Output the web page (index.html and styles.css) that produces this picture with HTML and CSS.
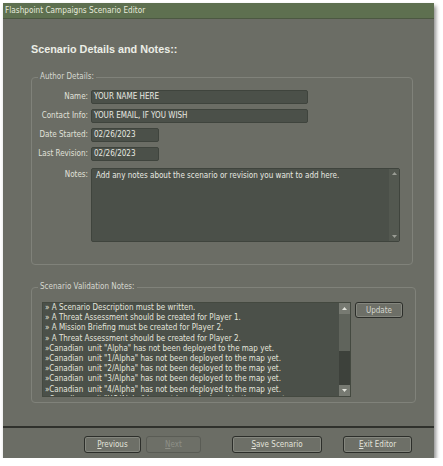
FILE: index.html
```html
<!DOCTYPE html>
<html lang="en">
<head>
  <meta charset="UTF-8" />
  <title>Flashpoint Campaigns Scenario Editor</title>
  <link rel="stylesheet" href="styles.css">
</head>
<body>

  <div class="window">
    <div class="titlebar">Flashpoint Campaigns Scenario Editor</div>

    <div class="content">
      <h1>Scenario Details and Notes::</h1>

      <fieldset class="group author">
        <legend>Author Details:</legend>
        <div class="form">
          <label>Name:</label>
          <div class="field name">YOUR NAME HERE</div>

          <label>Contact Info:</label>
          <div class="field name">YOUR EMAIL, IF YOU WISH</div>

          <label>Date Started:</label>
          <div class="field date">02/26/2023</div>

          <label>Last Revision:</label>
          <div class="field date">02/26/2023</div>

          <label class="top">Notes:</label>
          <div class="field notes">
            <div class="notes-text">Add any notes about the scenario or revision you want to add here.</div>
            <div class="scrollbar light">
              <svg class="arrow" width="9" height="9" viewBox="0 0 9 9"><polygon points="2,6 7,6 4.5,3" fill="#9a9d95"/></svg>
              <svg class="arrow" width="9" height="9" viewBox="0 0 9 9"><polygon points="2,3 7,3 4.5,6" fill="#9a9d95"/></svg>
            </div>
          </div>
        </div>
      </fieldset>

      <fieldset class="group validation">
        <legend>Scenario Validation Notes:</legend>
        <div class="validation-row">
          <div class="listbox">
            <div class="lines">
              <div>» A Scenario Description must be written.</div>
              <div>» A Threat Assessment should be created for Player 1.</div>
              <div>» A Mission Briefing must be created for Player 2.</div>
              <div>» A Threat Assessment should be created for Player 2.</div>
              <div>»Canadian&nbsp; unit "Alpha" has not been deployed to the map yet.</div>
              <div>»Canadian&nbsp; unit "1/Alpha" has not been deployed to the map yet.</div>
              <div>»Canadian&nbsp; unit "2/Alpha" has not been deployed to the map yet.</div>
              <div>»Canadian&nbsp; unit "3/Alpha" has not been deployed to the map yet.</div>
              <div>»Canadian&nbsp; unit "4/Alpha" has not been deployed to the map yet.</div>
              <div>»Canadian&nbsp; unit "HQ/Alpha" has not been deployed to the map yet.</div>
            </div>
            <div class="scrollbar dark">
              <div class="sb-btn"><svg width="9" height="9" viewBox="0 0 9 9"><polygon points="2,6 7,6 4.5,3" fill="#e2e4dc"/></svg></div>
              <div class="thumb"></div>
              <div class="sb-btn bottom"><svg width="9" height="9" viewBox="0 0 9 9"><polygon points="2,3 7,3 4.5,6" fill="#e2e4dc"/></svg></div>
            </div>
          </div>
          <button class="btn update">Update</button>
        </div>
      </fieldset>
    </div>

    <div class="footer">
      <button class="btn prev"><u>P</u>revious</button>
      <button class="btn next" disabled><u>N</u>ext</button>
      <button class="btn save"><u>S</u>ave Scenario</button>
      <button class="btn exit"><u>E</u>xit Editor</button>
    </div>
  </div>

</body>
</html>
```

FILE: styles.css
```css
body {
  margin: 0;
  background: #ffffff;
  font-family: "DejaVu Sans Condensed", "Liberation Sans", Arial, sans-serif;
  font-stretch: condensed;
  font-size: 8px;
  color: #e4e5dd;
}

.window {
  margin: 3px 0 0 3px;
  width: 431px;
  height: 455px;
  background: #6b6d65;
  box-shadow: 2px 3px 4px rgba(0, 0, 0, 0.45);
  display: flex;
  flex-direction: column;
}

.titlebar {
  height: 15px;
  line-height: 14px;
  padding-left: 2px;
  background: #5e7050;
  border-bottom: 1px solid #4c5842;
  color: #e6eadc;
  font-size: 8.2px;
}

.content {
  padding: 0 21px 0 28px;
}

h1 {
  margin: 23px 0 0 0;
  font-family: "Liberation Sans", Arial, sans-serif;
  font-stretch: normal;
  font-size: 10.8px;
  line-height: 14px;
  color: #eceee6;
}

.group {
  margin: 16px 0 0 0;
  padding: 0 12px 0 6px;
  border: 1px solid #80827a;
  border-radius: 4px;
}

.group legend {
  padding: 0 2px;
  color: #d6d8d0;
  line-height: 10px;
}

.author {
  height: 191px;
}

.form {
  display: grid;
  grid-template-columns: 50px auto;
  column-gap: 3px;
  row-gap: 5px;
  margin-top: 8px;
  justify-items: start;
}

.form label {
  justify-self: end;
  line-height: 14px;
  color: #e0e1d9;
  white-space: nowrap;
}

.form label.top {
  align-self: start;
  margin-top: 2px;
}

.field {
  box-sizing: border-box;
  height: 14px;
  line-height: 12px;
  padding: 0 2px;
  background: #4b5049;
  border: 1px solid #3f443d;
  border-radius: 2px;
  color: #e8e9e1;
  white-space: nowrap;
}

.field.name {
  width: 217px;
}

.field.date {
  width: 68px;
}

.field.notes {
  width: 309px;
  height: 74px;
  margin-top: 2px;
  padding: 0;
  display: flex;
}

.notes-text {
  flex: 1;
  padding: 2px 4px;
  line-height: 10px;
}

.scrollbar {
  width: 10px;
  display: flex;
  flex-direction: column;
  justify-content: space-between;
}

.scrollbar.light {
  background: #535850;
}

.scrollbar .arrow {
  display: block;
  margin: 0 auto;
}

.validation {
  margin-top: 17px;
  height: 119px;
}

.validation-row {
  display: flex;
  align-items: flex-start;
  margin: 10px 0 0 4px;
}

.listbox {
  width: 309px;
  height: 95px;
  display: flex;
  background: #4b5049;
  border: 1px solid #444940;
  box-sizing: border-box;
  overflow: hidden;
}

.lines {
  flex: 1;
  padding: 0 2px;
  line-height: 10.2px;
  white-space: nowrap;
  overflow: hidden;
}

.scrollbar.dark {
  width: 11px;
  background: #3d413b;
  justify-content: flex-start;
}

.sb-btn {
  height: 11px;
  background: #777a72;
  display: flex;
  align-items: center;
  justify-content: center;
}

.sb-btn.bottom {
  margin-top: auto;
}

.thumb {
  height: 37px;
  background: #60645c;
}

.btn {
  box-sizing: border-box;
  height: 17px;
  padding: 0;
  font-family: inherit;
  font-stretch: inherit;
  font-size: 8px;
  color: #e2e3db;
  background: #6d6f67;
  border: 1px solid #2c2e2a;
  border-radius: 3px;
  box-shadow: inset 0 0 0 1px #84867e;
}

.btn u {
  text-decoration: underline;
}

.btn.update {
  width: 48px;
  height: 16px;
  margin-left: 4px;
  color: #d4d6ce;
}

.footer {
  margin-top: auto;
  height: 32px;
  border-top: 2px solid #2f312c;
  display: flex;
  align-items: flex-start;
  padding: 8px 0 0 81px;
  box-sizing: border-box;
}

.btn.prev {
  width: 57px;
}

.btn.next {
  width: 55px;
  margin-left: 5px;
  color: #8d8f87;
  border-color: #5a5c55;
  box-shadow: none;
}

.btn.save {
  width: 90px;
  margin-left: 31px;
}

.btn.exit {
  width: 69px;
  margin-left: 21px;
}
```
